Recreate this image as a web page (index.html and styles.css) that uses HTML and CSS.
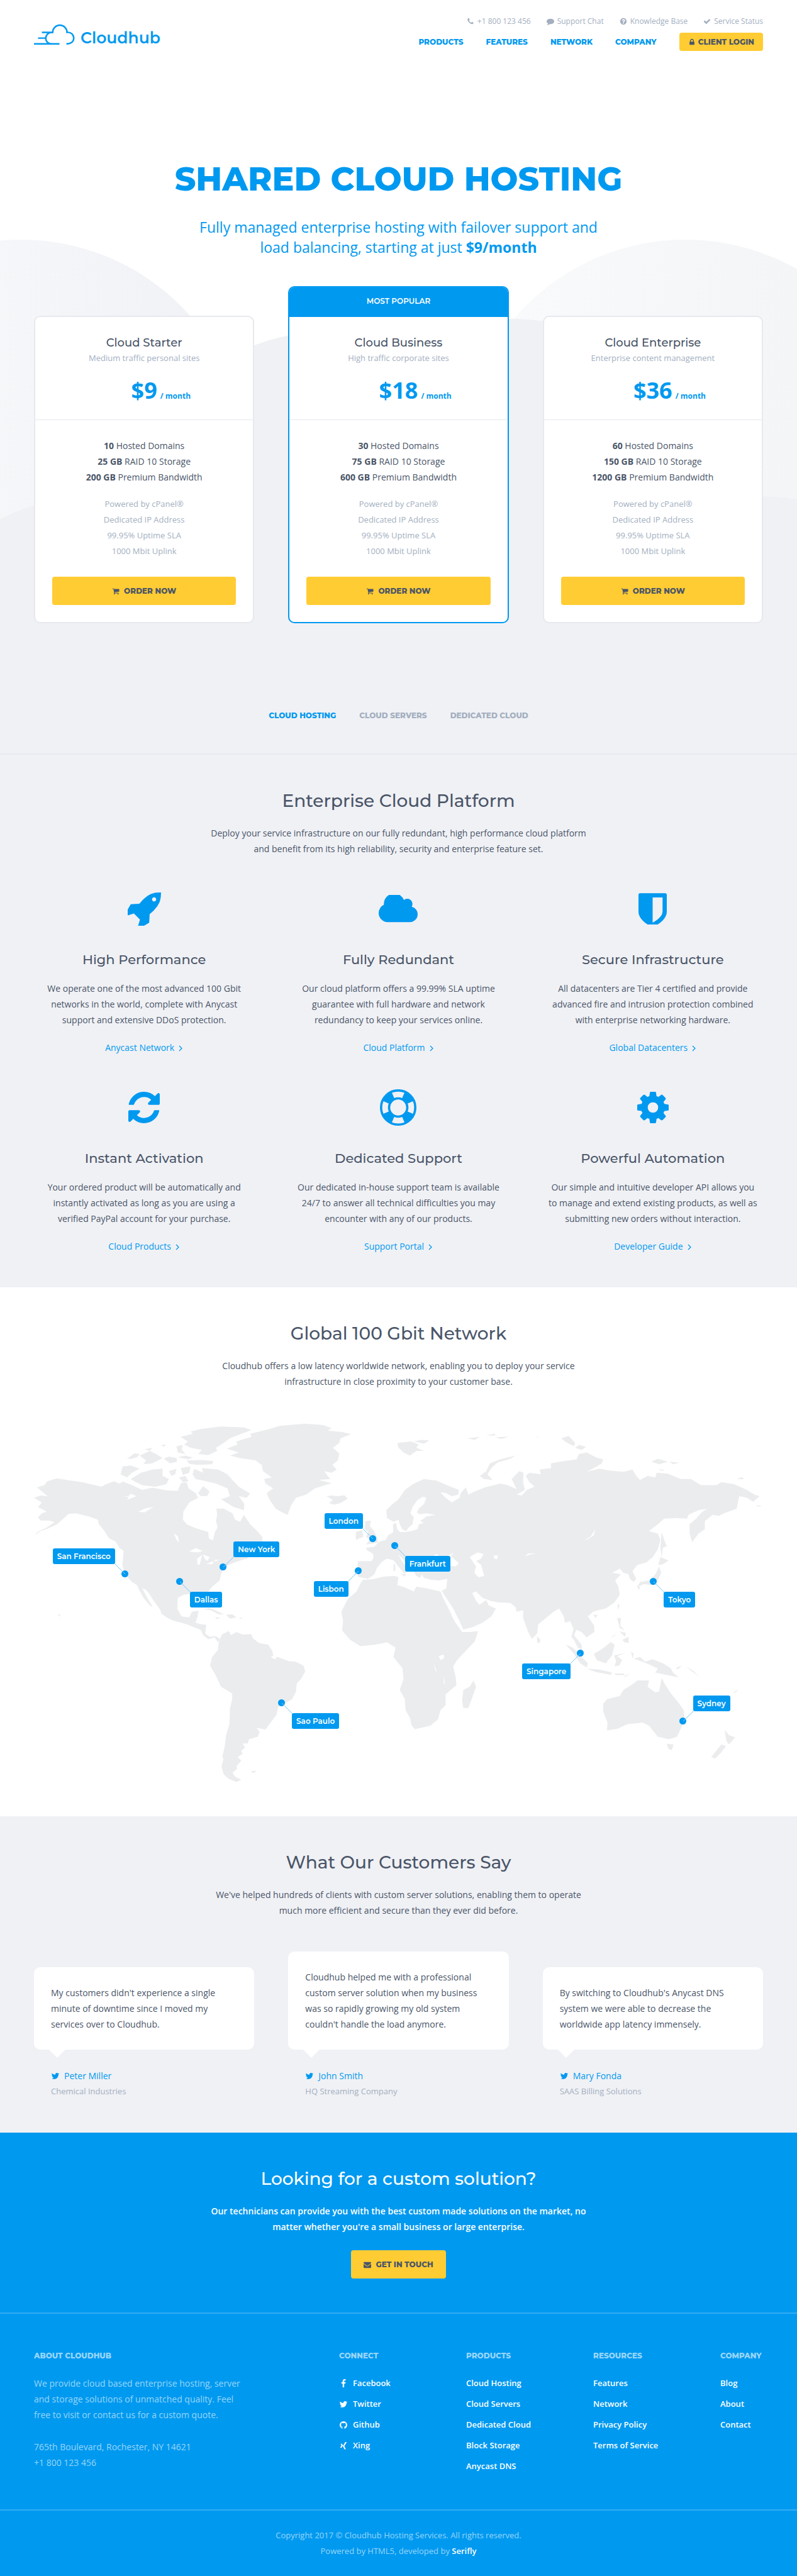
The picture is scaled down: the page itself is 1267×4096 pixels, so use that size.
FILE: index.html
```html
<!DOCTYPE html>
<html lang="en">
<head>
<meta charset="utf-8">
<meta name="viewport" content="width=device-width, initial-scale=1">
<title>Cloudhub</title>
<link rel="stylesheet" href="styles.css">
</head>
<body>
<svg class="sprite" aria-hidden="true">
<symbol id="i-phone" viewBox="0 0 1792 1792"><path d="M1600 1240q0 27-10 70.5t-21 68.5q-21 50-122 106-94 51-186 51-27 0-53-3.5t-57.5-12.5-47-14.5-55.5-20.5-49-18q-98-35-175-83-127-79-264-216t-216-264q-48-77-83-175-3-9-18-49t-20.5-55.5-14.5-47-12.5-57.5-3.5-53q0-92 51-186 56-101 106-122 25-11 68.5-21t70.5-10q14 0 21 3 18 6 53 76 11 19 30 54t35 63.5 31 53.5q3 4 17.5 25t21.5 35.5 7 28.5q0 20-28.5 50t-62 55-62 53-28.5 46q0 9 5 22.5t8.5 20.5 14 24 11.5 19q76 137 174 235t235 174q2 1 19 11.5t24 14 20.5 8.5 22.5 5q18 0 46-28.5t53-62 55-62 50-28.5q14 0 28.5 7t35.5 21.5 25 17.5q25 15 53.5 31t63.5 35 54 30q70 35 76 53 3 7 3 21z"/></symbol>
<symbol id="i-comment" viewBox="0 0 1792 1792"><path d="M1792 896q0 174-120 321.5t-326 233-450 85.5q-70 0-145-8-198 175-460 242-49 14-114 22h-5q-15 0-27-10.5t-16-27.5v-1q-3-4-.5-12t2-10 4.5-9.5l6-9 7-8.5 8-9q7-8 31-34.5t34.5-38 31-39.5 32.5-51 27-59 26-76q-157-89-247.5-220t-90.5-281q0-174 120-321.5t326-233 450-85.5 450 85.5 326 233 120 321.5z"/></symbol>
<symbol id="i-question" viewBox="0 0 1792 1792"><path d="M1024 1376v-192q0-14-9-23t-23-9h-192q-14 0-23 9t-9 23v192q0 14 9 23t23 9h192q14 0 23-9t9-23zm256-672q0-88-55.500-163t-138.500-116-170-41q-243 0-371 213-15 24 8 42l132 100q7 6 19 6 16 0 25-12 53-68 86-92 34-24 86-24 48 0 85.500 26t37.500 59q0 38-20 61t-68 45q-63 28-115.500 86.500t-52.500 125.500v36q0 14 9 23t23 9h192q14 0 23-9t9-23q0-19 21.500-49.500t54.500-49.500q32-18 49-28.500t46-35 44.500-48 28-60.500 12.500-81zm384 192q0 209-103 385.500t-279.500 279.500-385.500 103-385.500-103-279.500-279.500-103-385.500 103-385.500 279.500-279.500 385.500-103 385.500 103 279.500 279.500 103 385.500z"/></symbol>
<symbol id="i-check" viewBox="0 0 1792 1792"><path d="M1671 566q0 40-28 68l-724 724-136 136q-28 28-68 28t-68-28l-136-136-362-362q-28-28-28-68t28-68l136-136q28-28 68-28t68 28l294 295 656-657q28-28 68-28t68 28l136 136q28 28 28 68z"/></symbol>
<symbol id="i-lock" viewBox="0 0 1792 1792"><path d="M640 768h512v-192q0-106-75-181t-181-75-181 75-75 181v192zm832 96v576q0 40-28 68t-68 28h-960q-40 0-68-28t-28-68v-576q0-40 28-68t68-28h32v-192q0-184 132-316t316-132 316 132 132 316v192h32q40 0 68 28t28 68z"/></symbol>
<symbol id="i-cart" viewBox="0 0 1792 1792"><path d="M704 1536q0 52-38 90t-90 38-90-38-38-90 38-90 90-38 90 38 38 90zm896 0q0 52-38 90t-90 38-90-38-38-90 38-90 90-38 90 38 38 90zm128-1088v512q0 24-16.500 42.500t-40.500 21.500l-1044 122q13 60 13 70 0 16-24 64h920q26 0 45 19t19 45-19 45-45 19h-1024q-26 0-45-19t-19-45q0-11 8-31.500t16-36 21.500-40 15.500-29.500l-177-823h-204q-26 0-45-19t-19-45 19-45 45-19h256q16 0 28.500 6.500t19.500 15.500 13 24.500 8 26 5.500 29.500 4.500 26h1201q26 0 45 19t19 45z"/></symbol>
<symbol id="i-rocket" viewBox="128 128 1536 1536"><path d="M1440 448q0-40-28-68t-68-28-68 28-28 68 28 68 68 28 68-28 28-68zm224-288q0 249-75.500 430.500t-253.500 360.500q-81 80-195 176l-20 379q-2 16-16 26l-384 224q-7 4-16 4-12 0-23-9l-64-64q-13-14-8-32l85-276-281-281-276 85q-3 1-9 1-14 0-23-9l-64-64q-17-19-5-39l224-384q10-14 26-16l379-20q96-114 176-195 188-187 358-258t431-71q14 0 24 9.500t10 22.500z"/></symbol>
<symbol id="i-cloud" viewBox="64 256 1920 1280"><path d="M1984 1152q0 159-112.500 271.500t-271.500 112.500h-1088q-185 0-316.500-131.500t-131.500-316.500q0-132 71-241.500t187-163.500q-2-28-2-43 0-212 150-362t362-150q158 0 286.500 88t187.500 230q70-62 166-62 106 0 181 75t75 181q0 75-41 138 129 30 213 134.500t84 239.500z"/></symbol>
<symbol id="i-shield" viewBox="256 128 1280 1408"><path d="M1344 960v-640h-448v1137q119-63 213-137 235-184 235-360zm192-768v768q0 86-33.500 170.500t-83 150-118 127.500-126.500 103-121 77.500-89.500 49.500-42.500 20q-12 6-26 6t-26-6q-16-7-42.500-20t-89.500-49.500-121-77.500-126.500-103-118-127.500-83-150-33.500-170.500v-768q0-26 19-45t45-19h1152q26 0 45 19t19 45z"/></symbol>
<symbol id="i-refresh" viewBox="128 128 1536 1536"><path d="M1639 1056q0 5-1 7-64 268-268 434.500t-478 166.500q-146 0-282.500-55t-243.500-157l-129 129q-19 19-45 19t-45-19-19-45v-448q0-26 19-45t45-19h448q26 0 45 19t19 45-19 45l-137 137q71 66 161 102t187 36q134 0 250-65t186-179q11-17 53-117 8-23 30-23h192q13 0 22.500 9.500t9.500 22.500zm25-800v448q0 26-19 45t-45 19h-448q-26 0-45-19t-19-45 19-45l138-138q-148-137-349-137-134 0-250 65t-186 179q-11 17-53 117-8 23-30 23h-199q-13 0-22.500-9.500t-9.500-22.500v-7q65-268 270-434.500t480-166.500q146 0 284 55.500t245 156.500l130-129q19-19 45-19t45 19 19 45z"/></symbol>
<symbol id="i-ring" viewBox="0 0 64 64"><g fill="none" stroke="currentColor"><circle cx="32" cy="32" r="30" stroke-width="4"/><circle cx="32" cy="32" r="16" stroke-width="4"/><circle cx="32" cy="32" r="23" stroke-width="12" pathLength="360" stroke-dasharray="44 46" stroke-dashoffset="-23"/></g></symbol>
<symbol id="i-cog" viewBox="128 128 1536 1536"><path d="M1152 896q0-106-75-181t-181-75-181 75-75 181 75 181 181 75 181-75 75-181zm512-109v222q0 12-8 23t-20 13l-185 28q-19 54-39 91 35 50 107 138 10 12 10 25t-9 23q-27 37-99 108t-94 71q-12 0-26-9l-138-108q-44 23-91 38-16 136-29 186-7 28-36 28h-222q-14 0-24.500-8.500t-11.500-21.500l-28-184q-49-16-90-37l-141 107q-10 9-25 9-14 0-25-11-126-114-165-168-7-10-7-23 0-12 8-23 15-21 51-66.500t54-70.500q-27-50-41-99l-183-27q-13-2-21-12.500t-8-23.500v-222q0-12 8-23t19-13l186-28q14-46 39-92-40-57-107-138-10-12-10-24 0-10 9-23 26-36 98.500-107.500t94.500-71.500q13 0 26 10l138 107q44-23 91-38 16-136 29-186 7-28 36-28h222q14 0 24.500 8.500t11.500 21.500l28 184q49 16 90 37l142-107q9-9 24-9 13 0 25 10 129 119 165 170 7 8 7 22 0 12-8 23-15 21-51 66.500t-54 70.500q26 50 41 98l183 28q13 2 21 12.500t8 23.500z"/></symbol>
<symbol id="i-angle" viewBox="0 0 8 12"><path d="M2 2l4 4-4 4" fill="none" stroke="currentColor" stroke-width="1.300"/></symbol>
<symbol id="i-twitter" viewBox="0 0 1792 1792"><path d="M1684 408q-67 98-162 167 1 14 1 42 0 130-38 259.500t-115.500 248.500-184.500 210.500-258 146-323 54.500q-271 0-496-145 35 4 78 4 225 0 401-138-105-2-188-64.500t-114-159.500q33 5 61 5 43 0 85-11-112-23-185.500-111.500t-73.500-205.500v-4q68 38 146 41-66-44-105-115t-39-154q0-88 44-163 121 149 294.500 238.500t371.500 99.500q-8-38-8-74 0-134 94.500-228.500t228.500-94.500q140 0 236 102 109-21 205-78-37 115-142 178 93-10 186-50z"/></symbol>
<symbol id="i-facebook" viewBox="0 0 1792 1792"><path d="M1343 12v264h-157q-86 0-116 36t-30 108v189h293l-39 296h-254v759h-306v-759h-255v-296h255v-218q0-186 104-288.500t277-102.500q147 0 228 12z"/></symbol>
<symbol id="i-github" viewBox="0 0 1792 1792"><path d="M896 128q209 0 385.500 103t279.500 279.500 103 385.500q0 251-146.500 451.500t-378.500 277.500q-27 5-40-7t-13-30q0-3 .5-76.500t.5-134.500q0-97-52-142 57-6 102.500-18t94-39 81-66.500 53-105 20.500-150.500q0-119-79-206 37-91-8-204-28-9-81 11t-92 44l-38 24q-93-26-192-26t-192 26q-16-11-42.500-27t-83.500-38.500-85-13.500q-45 113-8 204-79 87-79 206 0 85 20.500 150t52.500 105 80.500 67 94 39 102.500 18q-39 36-49 103-21 10-45 15t-57 5-65.500-21.500-55.500-62.500q-19-32-48.500-52t-49.500-24l-20-3q-21 0-29 4.500t-5 11.500 9 14 13 12l7 5q22 10 43.500 38t31.500 51l10 23q13 38 44 61.500t67 30 69.500 7 55.500-3.500l23-4q0 38 .5 88.500t.5 54.500q0 18-13 30t-40 7q-232-77-378.500-277.500t-146.500-451.500q0-209 103-385.500t279.500-279.500 385.500-103z"/></symbol>
<symbol id="i-xing" viewBox="0 0 24 24"><path d="M4 6.500h4l2.500 4.300-3.600 6.200h-4l3.600-6.200zM17 1.500h4L14.300 13l4.300 8.500h-4L10.300 13z"/></symbol>
<symbol id="i-mail" viewBox="0 0 1792 1792"><path d="M1792 710v794q0 66-47 113t-113 47h-1472q-66 0-113-47t-47-113v-794q44 49 101 87 362 246 497 345 57 42 92.500 65.500t94.500 48 110 24.500h2q51 0 110-24.500t94.500-48 92.500-65.500q170-123 498-345 57-39 100-87zm0-294q0 79-49 151t-122 123q-376 261-468 325-10 7-42.500 31t-54 38.500-52 32.500-57.500 27-50 9h-2q-23 0-50-9t-57.500-27-52-32.500-54-38.500-42.500-31q-91-64-262-182.500t-205-142.500q-62-42-117-115.500t-55-136.500q0-78 41.500-130t118.500-52h1472q65 0 112.500 47t47.500 113z"/></symbol>
</svg>

<div class="hero">
  <svg class="hero-bg" viewBox="0 0 1400 1326" preserveAspectRatio="xMidYMin slice" aria-hidden="true">
    <defs>
      <linearGradient id="ga"><stop offset="0" stop-color="#fafbfc"/><stop offset="1" stop-color="#f0f1f5"/></linearGradient>
      <linearGradient id="gb"><stop offset="0" stop-color="#fafbfc"/><stop offset="1" stop-color="#f1f3f5"/></linearGradient>
    </defs>
    <circle cx="37" cy="817" r="396" fill="url(#ga)"/>
    <circle cx="1204" cy="817" r="396" fill="url(#gb)"/>
    <g fill="#f0f1f5"><circle cx="587" cy="977" r="396"/><circle cx="895" cy="956" r="396"/><circle cx="180" cy="1265" r="396"/><circle cx="1334" cy="1268" r="396"/><path d="M0 1040h1400v400H0z"/></g>
  </svg>
  <div class="wrap hero-inner">
    <header class="header">
      <a class="logo" href="#">
        <svg viewBox="60 60 215 120" aria-hidden="true"><path d="M101 110h56a37 37 0 0 1 74 0c22-2 35 14 35 30s-13 30-38 30M157 111c-20-3-36 12-36 29s12 30 31 30M81 140h40M60 170h132" fill="none" stroke="currentColor" stroke-width="8"/></svg>
        <span>Cloudhub</span>
      </a>
      <div class="header-right">
        <nav class="topline" aria-label="Support">
          <a href="#"><svg class="icon"><use href="#i-phone"/></svg>+1 800 123 456</a>
          <a href="#"><svg class="icon"><use href="#i-comment"/></svg>Support Chat</a>
          <a href="#"><svg class="icon"><use href="#i-question"/></svg>Knowledge Base</a>
          <a href="#"><svg class="icon"><use href="#i-check"/></svg>Service Status</a>
        </nav>
        <nav class="mainnav" aria-label="Main">
          <a href="#">PRODUCTS</a><a href="#">FEATURES</a><a href="#">NETWORK</a><a href="#">COMPANY</a>
          <button class="btn btn-small" type="button"><svg class="icon"><use href="#i-lock"/></svg>CLIENT LOGIN</button>
        </nav>
      </div>
    </header>
    <h1>SHARED CLOUD HOSTING</h1>
    <p class="lead">Fully managed enterprise hosting with failover support and<br>load balancing, starting at just <strong>$9/month</strong></p>
    <div class="plans">
      <article class="plan">
        <div class="plan-head"><h3>Cloud Starter</h3><p>Medium traffic personal sites</p><div class="price"><span>$9<small>/ month</small></span></div></div>
        <div class="plan-body">
          <ul><li><b>10</b> Hosted Domains</li><li><b>25 GB</b> RAID 10 Storage</li><li><b>200 GB</b> Premium Bandwidth</li></ul>
          <ul class="muted"><li>Powered by cPanel®</li><li>Dedicated IP Address</li><li>99.95% Uptime SLA</li><li>1000 Mbit Uplink</li></ul>
          <button class="btn" type="button"><svg class="icon"><use href="#i-cart"/></svg>ORDER NOW</button>
        </div>
      </article>
      <article class="plan popular">
        <div class="ribbon">MOST POPULAR</div>
        <div class="plan-head"><h3>Cloud Business</h3><p>High traffic corporate sites</p><div class="price"><span>$18<small>/ month</small></span></div></div>
        <div class="plan-body">
          <ul><li><b>30</b> Hosted Domains</li><li><b>75 GB</b> RAID 10 Storage</li><li><b>600 GB</b> Premium Bandwidth</li></ul>
          <ul class="muted"><li>Powered by cPanel®</li><li>Dedicated IP Address</li><li>99.95% Uptime SLA</li><li>1000 Mbit Uplink</li></ul>
          <button class="btn" type="button"><svg class="icon"><use href="#i-cart"/></svg>ORDER NOW</button>
        </div>
      </article>
      <article class="plan">
        <div class="plan-head"><h3>Cloud Enterprise</h3><p>Enterprise content management</p><div class="price"><span>$36<small>/ month</small></span></div></div>
        <div class="plan-body">
          <ul><li><b>60</b> Hosted Domains</li><li><b>150 GB</b> RAID 10 Storage</li><li><b>1200 GB</b> Premium Bandwidth</li></ul>
          <ul class="muted"><li>Powered by cPanel®</li><li>Dedicated IP Address</li><li>99.95% Uptime SLA</li><li>1000 Mbit Uplink</li></ul>
          <button class="btn" type="button"><svg class="icon"><use href="#i-cart"/></svg>ORDER NOW</button>
        </div>
      </article>
    </div>
    <nav class="tabs" aria-label="Product lines"><a class="active" href="#">CLOUD HOSTING</a><a href="#">CLOUD SERVERS</a><a href="#">DEDICATED CLOUD</a></nav>
  </div>
</div>

<section class="section shaded">
  <div class="wrap">
    <h2>Enterprise Cloud Platform</h2>
    <p class="intro">Deploy your service infrastructure on our fully redundant, high performance cloud platform<br>and benefit from its high reliability, security and enterprise feature set.</p>
    <div class="features">
      <div class="feature"><div class="feature-icon"><svg width="53" height="53"><use href="#i-rocket"/></svg></div><h3>High Performance</h3><p>We operate one of the most advanced 100 Gbit<br>networks in the world, complete with Anycast<br>support and extensive DDoS protection.</p><a href="#">Anycast Network<svg class="angle"><use href="#i-angle"/></svg></a></div>
      <div class="feature"><div class="feature-icon"><svg width="62" height="45"><use href="#i-cloud"/></svg></div><h3>Fully Redundant</h3><p>Our cloud platform offers a 99.99% SLA uptime<br>guarantee with full hardware and network<br>redundancy to keep your services online.</p><a href="#">Cloud Platform<svg class="angle"><use href="#i-angle"/></svg></a></div>
      <div class="feature"><div class="feature-icon"><svg width="45" height="50"><use href="#i-shield"/></svg></div><h3>Secure Infrastructure</h3><p>All datacenters are Tier 4 certified and provide<br>advanced fire and intrusion protection combined<br>with enterprise networking hardware.</p><a href="#">Global Datacenters<svg class="angle"><use href="#i-angle"/></svg></a></div>
      <div class="feature"><div class="feature-icon"><svg width="50" height="50"><use href="#i-refresh"/></svg></div><h3>Instant Activation</h3><p>Your ordered product will be automatically and<br>instantly activated as long as you are using a<br>verified PayPal account for your purchase.</p><a href="#">Cloud Products<svg class="angle"><use href="#i-angle"/></svg></a></div>
      <div class="feature"><div class="feature-icon"><svg width="58" height="58"><use href="#i-ring"/></svg></div><h3>Dedicated Support</h3><p>Our dedicated in-house support team is available<br>24/7 to answer all technical difficulties you may<br>encounter with any of our products.</p><a href="#">Support Portal<svg class="angle"><use href="#i-angle"/></svg></a></div>
      <div class="feature"><div class="feature-icon"><svg width="50" height="50"><use href="#i-cog"/></svg></div><h3>Powerful Automation</h3><p>Our simple and intuitive developer API allows you<br>to manage and extend existing products, as well as<br>submitting new orders without interaction.</p><a href="#">Developer Guide<svg class="angle"><use href="#i-angle"/></svg></a></div>
    </div>
  </div>
</section>

<section class="section">
  <div class="wrap">
    <h2>Global 100 Gbit Network</h2>
    <p class="intro">Cloudhub offers a low latency worldwide network, enabling you to deploy your service<br>infrastructure in close proximity to your customer base.</p>
    <div class="map">
      <svg viewBox="0 0 1280 632" aria-hidden="true">
        <g transform="matrix(.4464 0 0 .5485 -60 -201)">
          <path fill="#ebecee" d="M146 572L175 565 187 552 225 543 290 551 330 556 400 570 415 563 450 552 470 560 485 553 520 565 560 580 600 573 660 582 700 583 712 558 735 555 742 575 770 590 780 605 745 620 722 650 720 675 735 690 770 702 800 710 820 715 822 735 838 742 846 715 857 700 850 680 855 660 852 640 880 640 915 655 925 675 945 682 960 660 985 690 1010 710 1032 730 1033 743 1000 780 970 800 950 805 915 815 905 818 880 830 870 850 865 870 835 890 820 905 828 930 830 955 818 950 805 925 790 912 760 912 725 915 700 925 698 960 715 985 745 988 755 970 782 967 778 985 770 1005 790 1010 812 1012 808 1040 825 1050 850 1048 864 1056 858 1068 845 1052 820 1058 800 1045 790 1028 770 1022 740 1012 715 1005 680 998 650 985 635 975 632 965 605 935 590 915 575 900 560 895 580 925 602 955 590 950 565 925 548 900 540 885 520 875 505 862 490 845 482 820 487 775 470 765 455 745 430 735 410 710 390 690 385 675 350 665 300 655 270 657 250 672 225 690 190 703 160 712 137 726 150 714 185 700 215 683 195 678 160 678 150 668 165 655 185 650 150 635 165 620 135 605 160 598 188 600ZM893 448L935 435 930 425 990 410 985 400 1060 385 1100 375 1200 368 1270 372 1305 382 1290 390 1350 395 1382 401 1340 415 1335 430 1310 445 1335 463 1330 485 1308 500 1325 515 1305 525 1275 520 1300 545 1255 548 1305 558 1240 575 1205 595 1165 605 1145 630 1132 660 1110 652 1085 640 1060 610 1050 590 1075 575 1045 560 1040 545 1070 540 1035 520 1030 500 1005 485 945 478 905 470 940 460ZM710 410L760 400 750 393 790 385 870 377 960 380 990 388 950 400 905 415 880 430 850 445 855 455 820 468 780 465 795 452 750 445 725 435 740 425ZM735 485L800 484 840 488 835 498 780 500 745 497ZM475 530L483 505 515 502 550 512 520 525 500 540ZM515 545L555 525 600 515 640 512 640 535 665 545 655 562 610 570 560 565 535 555ZM500 480L530 463 550 465 540 475 520 480ZM550 470L590 455 615 465 640 478 600 495 565 498 575 485ZM570 450L600 445 590 455ZM645 480L665 473 695 478 697 490 670 495ZM635 437L655 434 645 442ZM665 520L695 512 690 530 675 535ZM712 510L750 505 745 525 720 532ZM705 540L730 535 742 552 720 555ZM695 440L720 436 715 450 730 465 700 460ZM700 475L730 470 760 476 740 482ZM758 530L765 513 800 525 795 510 860 515 895 530 915 548 940 570 985 592 970 605 940 600 962 625 960 645 920 635 870 610 905 600 895 575 850 560 800 550 770 545ZM780 590L800 568 825 585 815 600 790 600ZM1285 600L1305 598 1330 600 1355 597 1368 608 1340 622 1315 627 1295 622 1310 612ZM800 962L825 958 855 968 882 978 860 978 830 965ZM890 980L915 978 930 988 905 992ZM943 989h10v3h-10ZM848 988l16 1-2 4-12-1ZM230 977l9 4-6 5ZM862 1062L875 1042 900 1032 910 1045 930 1035 955 1043 990 1042 995 1055 1020 1070 1055 1075 1072 1095 1075 1110 1100 1117 1135 1128 1165 1130 1195 1143 1201 1162 1185 1185 1168 1200 1165 1225 1150 1250 1120 1263 1095 1275 1088 1300 1065 1325 1045 1347 1010 1342 1022 1355 1015 1370 980 1378 975 1392 955 1392 965 1405 950 1415 955 1425 935 1435 950 1447 930 1465 935 1472 915 1485 925 1498 950 1508 930 1515 900 1505 880 1490 872 1465 880 1440 875 1435 885 1400 890 1365 903 1330 905 1280 914 1250 914 1232 870 1210 850 1175 827 1142 835 1115 858 1092ZM990 1480h20l-8 5h-10ZM960 800l18-4-8 6Z"/>
          <path fill="#fff" d="M745 777L770 766 797 775 780 780ZM776 800L796 788 786 820 777 818ZM798 787L826 795 815 808 806 800ZM812 817L842 808 835 818ZM840 805L864 803 850 809ZM478 600L505 601 515 592 537 600 500 612 508 603ZM545 650L570 640 605 634 570 652ZM685 720L700 728 706 748 695 740ZM1068 1112L1090 1112 1085 1122 1070 1118Z"/>
        </g>
        <g transform="matrix(.4464 0 0 .5485 640 -201)">
          <path fill="#ebecee" d="M-160 808L-105 808-98 795-100 785-125 772-128 765-95 762-75 745-50 740-40 725-20 715-22 690-10 685-5 705 5 715 25 715 50 712 75 705 80 690 100 685 85 680 110 665 145 660 110 655 85 658 72 652 80 640 100 625 110 605 95 602 75 612 55 635 47 655 60 668 55 690 40 700 30 712 15 706 5 690 0 675-20 682-45 670-48 645-30 630 0 610 25 580 60 560 100 545 150 550 190 565 237 580 235 595 210 600 185 590 165 588 185 605 210 620 240 605 245 590 265 572 275 595 300 585 340 572 400 560 430 565 465 578 445 545 475 520 492 525 490 555 497 580 465 595 485 598 505 580 535 570 515 555 500 535 515 525 560 530 555 515 600 510 600 495 650 488 700 482 710 465 740 460 775 475 805 482 800 495 780 505 740 522 790 512 830 518 885 522 920 515 935 535 950 548 980 535 1010 540 1015 525 1060 528 1110 545 1150 545 1190 565 1250 565 1270 555 1320 562 1370 580 1400 595 1420 600 1395 618 1370 605 1340 600 1335 620 1330 640 1280 655 1260 663 1235 660 1205 680 1205 705 1180 720 1155 747 1145 720 1145 690 1170 672 1195 650 1215 640 1180 645 1140 660 1135 672 1090 670 1045 672 1020 690 985 712 1020 720 1030 740 1020 770 1000 795 975 812 940 820 920 840 935 865 925 875 910 865 905 850 885 845 870 832 840 845 875 850 852 870 865 890 870 915 850 940 815 960 785 965 765 970 745 985 770 1015 770 1035 740 1052 720 1035 700 1028 690 1045 720 1075 722 1092 705 1085 690 1060 680 1050 688 1025 675 1000 655 1005 650 985 632 960 610 970 580 990 550 1010 545 1040 525 1057 510 1035 490 990 490 965 465 970 460 955 440 942 390 940 360 935 330 925 305 905 290 910 305 935 318 948 345 932 355 950 383 960 365 985 330 1005 290 1020 255 1027 240 1000 215 960 195 935 170 903 188 895 192 865 160 870 130 868 100 862 92 850 85 862 70 855 55 835 30 815 10 795 0 788 15 810 35 830 30 845 22 848 0 825-20 805-45 800-65 810-85 830-95 850-120 865-140 862-160 858ZM-140 868L-100 866-60 858-15 855 0 860-5 885 25 892 60 905 70 890 110 895 165 905 175 925 200 965 220 1000 250 1035 280 1035 313 1032 300 1065 265 1095 230 1125 215 1145 225 1180 228 1205 185 1235 185 1270 165 1285 155 1315 125 1335 65 1346 52 1335 45 1310 28 1285 25 1250 5 1220 20 1185 15 1150 0 1135-20 1115-12 1085-45 1068-90 1075-150 1080-190 1060-222 1030-218 1000-225 970-200 930-165 905-150 880ZM255 1220L280 1210 295 1190 305 1210 290 1245 275 1278 255 1278 250 1255ZM545 1048L558 1060 555 1070 545 1068ZM-130 680L-108 678-113 695-98 710-83 735-80 748-128 755-113 740-128 730-118 715-133 705ZM-168 715L-143 708-138 730-168 740ZM-5 430L50 425 80 435 70 445 100 455 70 455 45 470 20 460 0 445ZM60 425L90 420 122 422 100 432ZM270 415l50-5-20 10ZM345 405l35-5v6ZM380 412l55-3-30 8ZM540 411l10-1-2 3ZM320 535L345 520 360 495 400 482 460 470 440 480 390 492 365 510 350 530 370 548 335 545ZM640 415L670 407 695 430 690 440 660 428ZM695 445L710 436 738 442 720 452ZM995 490L1020 480 1060 490 1025 498ZM1065 490L1105 493 1080 498ZM1020 514l28 2-12 3ZM1330 545L1350 539 1360 545ZM1405 628l25 3-15 2ZM1035 715L1045 740 1055 760 1040 765 1035 795 1030 765ZM1030 795L1062 806 1040 818 1022 820ZM1025 825L1033 845 1020 870 1000 885 965 882 940 890 950 875 985 870 1010 850ZM937 885L952 890 945 900ZM862 945l8 5-8 14ZM766 980l17 0-8 10ZM860 990L875 990 872 1015 890 1030 870 1022ZM880 1060L905 1050 905 1070 890 1068ZM870 1033l25 5-5 12ZM835 1055l18-15-5 8ZM768 1105L800 1090 835 1067 850 1075 840 1110 815 1135 780 1125ZM658 1075L685 1085 715 1110 745 1135 740 1148 715 1135 690 1105ZM740 1152L790 1155 840 1165 835 1172 775 1163ZM850 1168h40l-5 5h-30ZM885 1178l28-12-20 12ZM848 1110L895 1102 860 1112 880 1125 868 1142 850 1145 856 1128ZM915 1098l10 7-5 15ZM925 1120L950 1115 970 1130 1000 1122 1040 1135 1070 1150 1080 1165 1102 1180 1070 1175 1040 1170 1010 1165 1020 1152 990 1140 960 1130ZM1090 1150l25-8-15 12ZM1133 1146l25 13 25 19-30-17ZM805 1265L820 1250 870 1240 885 1220 915 1205 940 1190 985 1190 980 1210 1010 1228 1025 1225 1035 1182 1050 1205 1070 1230 1100 1260 1122 1285 1125 1310 1110 1345 1095 1370 1065 1378 1020 1370 1000 1350 985 1335 960 1325 900 1330 860 1345 820 1350 822 1325 805 1290ZM1055 1393L1082 1395 1075 1413 1062 1410ZM1282 1348L1300 1365 1324 1372 1300 1395 1290 1385ZM1270 1395L1288 1400 1270 1420 1245 1440 1230 1435 1250 1415ZM1315 1230l22-12-10 10ZM-20 820l6-4 2 22-7 2ZM8 848l22 2-6 8Z"/>
          <path fill="#fff" d="M110 825L120 800 150 785 165 795 185 795 218 780 205 792 238 815 225 825 180 820 140 828ZM280 795L310 780 334 785 325 800 305 808 325 820 337 855 315 860 298 845 305 825ZM375 790L392 790 388 802 376 800ZM730 742L755 730 774 706 768 725 745 738ZM498 794L510 783 542 784 515 787ZM158 1112L177 1107 180 1118 165 1125ZM138 1133l13 30-6-5ZM177 1175l6 28-5-4Z"/>
        </g>
      </svg>
      <span class="pin nw" style="left:12.5%;top:42%"><b>San Francisco</b></span>
      <span class="pin se" style="left:20%;top:44%"><b>Dallas</b></span>
      <span class="pin ne" style="left:26%;top:40%"><b>New York</b></span>
      <span class="pin nw" style="left:46.5%;top:32.2%"><b>London</b></span>
      <span class="pin sw" style="left:44.5%;top:41%"><b>Lisbon</b></span>
      <span class="pin se" style="left:49.5%;top:34.1%"><b>Frankfurt</b></span>
      <span class="pin se" style="left:34%;top:77.8%"><b>Sao Paulo</b></span>
      <span class="pin se" style="left:85%;top:44%"><b>Tokyo</b></span>
      <span class="pin sw" style="left:75%;top:63.9%"><b>Singapore</b></span>
      <span class="pin ne" style="left:89%;top:82.9%"><b>Sydney</b></span>
    </div>
  </div>
</section>

<section class="section shaded">
  <div class="wrap">
    <h2>What Our Customers Say</h2>
    <p class="intro">We've helped hundreds of clients with custom server solutions, enabling them to operate<br>much more efficient and secure than they ever did before.</p>
    <div class="quotes">
      <figure><blockquote>My customers didn't experience a single<br>minute of downtime since I moved my<br>services over to Cloudhub.</blockquote><figcaption><a href="#"><svg class="icon"><use href="#i-twitter"/></svg>Peter Miller</a><span>Chemical Industries</span></figcaption></figure>
      <figure><blockquote>Cloudhub helped me with a professional<br>custom server solution when my business<br>was so rapidly growing my old system<br>couldn't handle the load anymore.</blockquote><figcaption><a href="#"><svg class="icon"><use href="#i-twitter"/></svg>John Smith</a><span>HQ Streaming Company</span></figcaption></figure>
      <figure><blockquote>By switching to Cloudhub's Anycast DNS<br>system we were able to decrease the<br>worldwide app latency immensely.</blockquote><figcaption><a href="#"><svg class="icon"><use href="#i-twitter"/></svg>Mary Fonda</a><span>SAAS Billing Solutions</span></figcaption></figure>
    </div>
  </div>
</section>

<section class="section cta">
  <div class="wrap">
    <h2>Looking for a custom solution?</h2>
    <p class="intro">Our technicians can provide you with the best custom made solutions on the market, no<br>matter whether you're a small business or large enterprise.</p>
    <button class="btn" type="button"><svg class="icon"><use href="#i-mail"/></svg>GET IN TOUCH</button>
  </div>
</section>

<footer class="footer">
  <div class="wrap footer-cols">
    <div class="about"><h4>ABOUT CLOUDHUB</h4><p>We provide cloud based enterprise hosting, server<br>and storage solutions of unmatched quality. Feel<br>free to visit or contact us for a custom quote.</p><p>765th Boulevard, Rochester, NY 14621<br>+1 800 123 456</p></div>
    <div><h4>CONNECT</h4><ul><li><a href="#"><svg class="icon"><use href="#i-facebook"/></svg>Facebook</a></li><li><a href="#"><svg class="icon"><use href="#i-twitter"/></svg>Twitter</a></li><li><a href="#"><svg class="icon"><use href="#i-github"/></svg>Github</a></li><li><a href="#"><svg class="icon"><use href="#i-xing"/></svg>Xing</a></li></ul></div>
    <div><h4>PRODUCTS</h4><ul><li><a href="#">Cloud Hosting</a></li><li><a href="#">Cloud Servers</a></li><li><a href="#">Dedicated Cloud</a></li><li><a href="#">Block Storage</a></li><li><a href="#">Anycast DNS</a></li></ul></div>
    <div><h4>RESOURCES</h4><ul><li><a href="#">Features</a></li><li><a href="#">Network</a></li><li><a href="#">Privacy Policy</a></li><li><a href="#">Terms of Service</a></li></ul></div>
    <div><h4>COMPANY</h4><ul><li><a href="#">Blog</a></li><li><a href="#">About</a></li><li><a href="#">Contact</a></li></ul></div>
  </div>
  <div class="copyright">
    <p>Copyright 2017 © Cloudhub Hosting Services. All rights reserved.</p>
    <p>Powered by HTML5, developed by <a href="#">Serifly</a></p>
  </div>
</footer>
</body>
</html>
```

FILE: styles.css
```css
:root {
  --blue: #0099f0;
  --yellow: #ffcc33;
  --dark: #4a5568;
  --muted: #a3afbf;
  --shade: #f0f1f5;
  --line: #e7e9ee;
  --head: Montserrat, Inter, sans-serif;
}

* { box-sizing: border-box; margin: 0; padding: 0; }

body {
  font: 14px/25px "Open Sans", sans-serif;
  color: var(--dark);
  background: #fff;
}

a { color: var(--blue); text-decoration: none; }
ul { list-style: none; }
svg { fill: currentColor; }
.sprite { display: none; }
.icon { width: 12px; height: 12px; flex: none; }
.wrap { padding: 0 54px; }

h2 { font: 500 28px/36px var(--head); text-align: center; }
.intro { margin-top: 21px; text-align: center; }

.btn {
  display: inline-flex;
  align-items: center;
  justify-content: center;
  gap: 7px;
  height: 45px;
  padding: 0 20px;
  border: 0;
  border-radius: 4px;
  background: var(--yellow);
  color: var(--dark);
  font: 800 12px/20px var(--head);
  cursor: pointer;
}
.btn-small { height: 29px; padding: 0 14px; gap: 4px; }

/* Hero */
.hero { position: relative; border-bottom: 2px solid var(--line); overflow: hidden; }
.hero-bg { position: absolute; top: 0; left: 0; width: 100%; height: 100%; }
.hero-inner { position: relative; padding-top: 24px; padding-bottom: 50px; }

.header { display: flex; justify-content: space-between; align-items: flex-start; }
.logo { display: flex; align-items: flex-end; gap: 8px; margin-top: 12px; }
.logo svg { width: 66px; height: 37px; }
.logo span { font: 600 25px/25px var(--head); }
.header-right { display: grid; gap: 8px; justify-items: end; }
.topline { display: flex; gap: 25px; font-size: 12px; line-height: 20px; }
.topline a { display: flex; align-items: center; gap: 5px; color: var(--muted); }
.mainnav { display: flex; align-items: center; gap: 36px; }
.mainnav a { font: 800 12px/20px var(--head); }

h1 {
  margin-top: 172px;
  font: 800 52px/64px var(--head);
  color: var(--blue);
  text-align: center;
}
.lead { margin-top: 28px; font-size: 23px; line-height: 32px; color: var(--blue); text-align: center; }

.plans {
  display: grid;
  grid-template-columns: repeat(3, 1fr);
  align-items: end;
  gap: 54px;
  margin-top: 46px;
}
.plan { border: 2px solid var(--line); border-radius: 10px; background: #fff; text-align: center; overflow: hidden; }
.plan.popular { border-color: var(--blue); }
.ribbon { height: 47px; padding: 12px 0 15px; background: var(--blue); color: #fff; font: 600 12px/20px var(--head); }
.plan-head { padding: 28px 0 24px; border-bottom: 1px solid var(--line); }
.plan-head h3 { font: 500 18px/26px var(--head); }
.plan-head p { font-size: 13px; line-height: 22px; color: var(--muted); }
.price { margin-top: 19px; font-size: 36px; font-weight: 700; line-height: 44px; color: var(--blue); }
.price span { position: relative; }
.price small { position: absolute; left: 100%; bottom: 5px; margin-left: 5px; font-size: 12px; line-height: 20px; white-space: nowrap; }
.plan-body { padding: 28px 27px 27px; }
.plan-body .muted { margin: 18px 0 28px; font-size: 13px; color: var(--muted); }
.plan-body .btn { width: 100%; }

.tabs { display: flex; justify-content: center; gap: 37px; margin-top: 137px; font: 800 12px/20px var(--head); }
.tabs a { color: var(--muted); }
.tabs .active { color: var(--blue); }

/* Sections */
.section { padding: 55px 0 53px; }
.shaded { background: var(--shade); }

.features { display: grid; grid-template-columns: repeat(3, 1fr); gap: 53px 54px; margin-top: 53px; text-align: center; }
.feature-icon { display: flex; align-items: center; justify-content: center; height: 60px; color: var(--blue); }
.feature h3 { margin-top: 37px; font: 500 21px/28px var(--head); }
.feature p { margin: 19px 0; white-space: nowrap; }
.angle { width: 8px; height: 12px; margin-left: 6px; vertical-align: -2px; }

.map { position: relative; margin-top: 54px; }
.map > svg { display: block; width: 100%; }
.pin { position: absolute; width: 0; height: 0; }
.pin::before {
  content: "";
  position: absolute;
  left: -6px;
  top: -6px;
  width: 11px;
  height: 11px;
  border-radius: 50%;
  background: var(--blue);
}
.pin::after { content: ""; position: absolute; width: 17px; height: 17px; }
.pin b {
  position: absolute;
  padding: 0 7px;
  border-radius: 3px;
  background: var(--blue);
  color: #fff;
  font: 600 12px/25px var(--head);
  white-space: nowrap;
}
.nw b { right: 16px; bottom: 16px; }
.ne b { left: 16px; bottom: 16px; }
.sw b { right: 16px; top: 16px; }
.se b { left: 16px; top: 16px; }
.nw::after { right: 0; bottom: 0; }
.ne::after { left: 0; bottom: 0; }
.sw::after { right: 0; top: 0; }
.se::after { left: 0; top: 0; }
.nw::after, .se::after { background: linear-gradient(to top right, transparent 47%, #80ccf8 48% 52%, transparent 53%); }
.ne::after, .sw::after { background: linear-gradient(to bottom right, transparent 47%, #80ccf8 48% 52%, transparent 53%); }

.quotes { display: grid; grid-template-columns: repeat(3, 1fr); align-items: end; gap: 54px; margin-top: 53px; }
blockquote { position: relative; padding: 28px 27px; border-radius: 10px; background: #fff; white-space: nowrap; }
blockquote::after {
  content: "";
  position: absolute;
  left: 24px;
  top: 100%;
  border: 13px solid transparent;
  border-top-color: #fff;
  border-bottom: 0;
}
figcaption { display: grid; margin-top: 29px; padding: 0 27px; }
figcaption a { display: flex; align-items: center; gap: 7px; }
figcaption .icon, .footer .icon { width: 14px; height: 14px; }
figcaption span { font-size: 13px; color: var(--muted); }

/* Call to action and footer */
.cta { padding-bottom: 54px; background: var(--blue); color: #fff; text-align: center; border-bottom: 2px solid #33adf3; }
.cta .intro { font-weight: 600; }
.cta .btn { margin-top: 25px; vertical-align: top; }

.footer { background: var(--blue); color: #99d6f9; }
.footer-cols { display: grid; grid-template-columns: 1fr 202px 202px 202px 68px; padding-top: 57px; padding-bottom: 56px; }
.footer h4 { margin-bottom: 21px; font: 800 12px/20px var(--head); }
.footer a { color: #fff; font-weight: 600; }
.about p + p { margin-top: 26px; }
.footer ul { display: grid; gap: 8px; font-size: 13px; }
.footer li a { display: flex; align-items: center; gap: 8px; }
.copyright { padding: 27px 0; border-top: 2px solid #33adf3; font-size: 13px; text-align: center; }
```
